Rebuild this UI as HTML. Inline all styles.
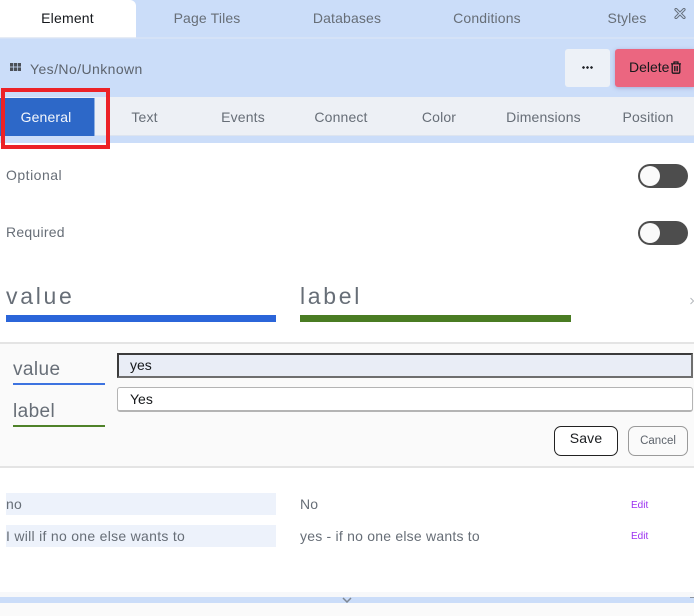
<!DOCTYPE html>
<html>
<head>
<meta charset="utf-8">
<style>
html,body{margin:0;padding:0;background:#fff}
body{width:694px;height:616px;position:relative;overflow:hidden;font-family:"Liberation Sans",sans-serif;color:#676e77}
.a{position:absolute}
.t{position:absolute;white-space:nowrap;line-height:20px;transform:translateX(-50%);letter-spacing:.15px}
.l{position:absolute;white-space:nowrap;line-height:20px}
.tog{position:absolute;left:638px;width:50px;height:24px;border-radius:12px;background:#4d4d4d}
.tog i{position:absolute;left:2px;top:2px;width:20px;height:20px;border-radius:50%;background:#fafafa}
</style>
</head>
<body>
<div class="a" style="left:0;top:0;width:694px;height:143px;background:#cbddf9"></div>
<div class="a" style="left:0;top:37px;width:694px;height:2px;background:#d5e2f7"></div>
<div class="a" style="left:0;top:0;width:136px;height:38px;background:#fff;border-top-right-radius:6px;border-bottom:1px solid #e6ecf5;box-sizing:border-box"></div>
<div class="t" style="left:67.5px;top:8px;font-size:14px;color:#15181c;letter-spacing:.2px">Element</div>
<div class="t" style="left:207px;top:8px;font-size:14px">Page Tiles</div>
<div class="t" style="left:347px;top:8px;font-size:14px">Databases</div>
<div class="t" style="left:487px;top:8px;font-size:14px">Conditions</div>
<div class="t" style="left:627px;top:8px;font-size:14px">Styles</div>
<svg class="a" style="left:674px;top:8px" width="12" height="11" viewBox="0 0 12 11"><path d="M2 1.5 L10 9.5 M10 1.5 L2 9.5" stroke="#68717e" stroke-width="3.2" stroke-linecap="round"/><path d="M2 1.5 L10 9.5 M10 1.5 L2 9.5" stroke="#cbddf9" stroke-width="1.2" stroke-linecap="round"/></svg>

<svg class="a" style="left:10px;top:63px" width="11" height="8" viewBox="0 0 11 8" fill="#4a4f57"><rect x="0" y="0" width="3.2" height="3.6"/><rect x="3.9" y="0" width="3.2" height="3.6"/><rect x="7.8" y="0" width="3.2" height="3.6"/><rect x="0" y="4.4" width="3.2" height="3.6"/><rect x="3.9" y="4.4" width="3.2" height="3.6"/><rect x="7.8" y="4.4" width="3.2" height="3.6"/></svg>
<div class="l" style="left:30px;top:59px;font-size:14px;color:#5d646e;letter-spacing:.42px">Yes/No/Unknown</div>

<div class="a" style="left:565px;top:49px;width:45px;height:38px;background:#edf1f7;border-radius:3px"></div>
<div class="a" style="left:582px;top:66px;width:11px;height:3px;background:radial-gradient(circle at 1.5px 1.5px,#1c1f24 1.2px,transparent 1.4px) 0 0/4px 3px repeat-x"></div>
<div class="a" style="left:615px;top:49px;width:79px;height:38px;background:#eb6680;border-radius:3px 0 0 3px;box-shadow:0 1px 4px rgba(120,110,170,.45)"></div>
<div class="l" style="left:629px;top:57px;font-size:14px;color:#17191c">Delete</div>
<svg class="a" style="left:670px;top:61px" width="12" height="13" viewBox="0 0 12 13" fill="none" stroke="#17191c"><path d="M1 2.8 H11 M4 2.5 V1 H8 V2.5" stroke-width="1.2"/><path d="M2.2 3 V11 Q2.2 12.2 3.4 12.2 H8.6 Q9.8 12.2 9.8 11 V3" stroke-width="1.3"/><path d="M4.6 5 V10.2 M6 5 V10.2 M7.4 5 V10.2" stroke-width=".9"/></svg>

<div class="a" style="left:0;top:97px;width:694px;height:39px;background:#edf0f5;border-bottom:1px solid #dde4ef;box-sizing:border-box"></div>
<div class="a" style="left:0;top:98px;width:95px;height:38px;background:#2d68c8;border-right:1px solid #8fb0e2;box-sizing:border-box"></div>
<div class="t" style="left:46px;top:106.5px;font-size:14px;color:#f4f7fc">General</div>
<div class="t" style="left:144.5px;top:106.5px;font-size:14px">Text</div>
<div class="t" style="left:243px;top:106.5px;font-size:14px">Events</div>
<div class="t" style="left:341px;top:106.5px;font-size:14px">Connect</div>
<div class="t" style="left:439px;top:106.5px;font-size:14px">Color</div>
<div class="t" style="left:543.5px;top:106.5px;font-size:14px">Dimensions</div>
<div class="t" style="left:648px;top:106.5px;font-size:14px">Position</div>
<div class="a" style="left:1px;top:88px;width:109px;height:61px;border:4px solid #ec2227;box-sizing:border-box"></div>

<div class="l" style="left:6px;top:165px;font-size:14px;letter-spacing:.5px">Optional</div>
<div class="tog" style="top:164px"><i></i></div>
<div class="l" style="left:6px;top:222px;font-size:14px;letter-spacing:.25px">Required</div>
<div class="tog" style="top:221px"><i></i></div>

<div class="l" style="left:6px;top:284px;font-size:23px;line-height:24px;letter-spacing:2.7px">value</div>
<div class="a" style="left:6px;top:315px;width:270px;height:7px;background:#2b65d9"></div>
<div class="l" style="left:300px;top:284px;font-size:23px;line-height:24px;letter-spacing:2.7px">label</div>
<div class="a" style="left:300px;top:315px;width:271px;height:7px;background:#4a7c23"></div>
<svg class="a" style="left:690px;top:297px" width="4" height="8" viewBox="0 0 4 8"><path d="M0.5 1 L3.5 4 L0.5 7" fill="none" stroke="#b5b8bc" stroke-width="1"/></svg>

<div class="a" style="left:0;top:342px;width:694px;height:126px;background:#fafafa;border-top:2px solid #e4e4e4;border-bottom:2px solid #e4e4e4;box-sizing:border-box"></div>
<div class="l" style="left:13px;top:360px;font-size:19px;letter-spacing:.4px">value</div>
<div class="a" style="left:13px;top:383px;width:92px;height:2px;background:#3d73e0"></div>
<div class="l" style="left:13px;top:402px;font-size:19px;letter-spacing:.4px">label</div>
<div class="a" style="left:13px;top:425px;width:92px;height:2px;background:#4f8229"></div>

<div class="a" style="left:117px;top:353px;width:576px;height:25px;background:#e9edf6;border:2px solid;border-color:#3b3b3b #6e6e6e #6e6e6e #3b3b3b;box-sizing:border-box"></div>
<div class="l" style="left:130px;top:355px;font-size:14px;color:#16181b">yes</div>
<div class="a" style="left:117px;top:387px;width:576px;height:25px;background:#fff;border:1px solid #b4b4b4;border-width:1.5px 1px 2px 1px;border-radius:3px;box-sizing:border-box"></div>
<div class="l" style="left:130px;top:389px;font-size:14px;color:#16181b">Yes</div>

<div class="a" style="left:554px;top:426px;width:64px;height:30px;background:#fff;border:1px solid #222;border-radius:7px;box-sizing:border-box"></div>
<div class="t" style="left:586px;top:428px;font-size:14px;color:#1b1d20">Save</div>
<div class="a" style="left:628px;top:426px;width:60px;height:30px;background:#fafafa;border:1px solid #9a9a9a;border-radius:7px;box-sizing:border-box"></div>
<div class="t" style="left:658px;top:431px;font-size:11.5px;color:#5e646c;letter-spacing:0">Cancel</div>

<div class="a" style="left:6px;top:493px;width:270px;height:22px;background:#edf2fb"></div>
<div class="l" style="left:6px;top:494px;font-size:14px;letter-spacing:.2px">no</div>
<div class="l" style="left:300px;top:494px;font-size:14px;letter-spacing:.2px">No</div>
<div class="l" style="left:631px;top:496px;font-size:10px;color:#9b30f0">Edit</div>
<div class="a" style="left:6px;top:525px;width:270px;height:22px;background:#edf2fb"></div>
<div class="l" style="left:6px;top:525.5px;font-size:14px;letter-spacing:.29px">I will if no one else wants to</div>
<div class="l" style="left:300px;top:525.5px;font-size:14px;letter-spacing:.22px">yes - if no one else wants to</div>
<div class="l" style="left:631px;top:527px;font-size:10px;color:#9b30f0">Edit</div>

<div class="a" style="left:0;top:592px;width:694px;height:5px;background:#f7f8fa"></div>
<div class="a" style="left:0;top:597px;width:694px;height:6px;background:#cbddf9"></div>
<div class="a" style="left:0;top:603px;width:694px;height:13px;background:#fafafa"></div>
<svg class="a" style="left:342px;top:597px" width="10" height="6" viewBox="0 0 10 6"><path d="M1 1 L5 5 L9 1" fill="none" stroke="#7d8794" stroke-width="1.5"/></svg>
<div class="a" style="left:690px;top:597px;width:4px;height:1px;background:#8d96a3"></div>
</body>
</html>
